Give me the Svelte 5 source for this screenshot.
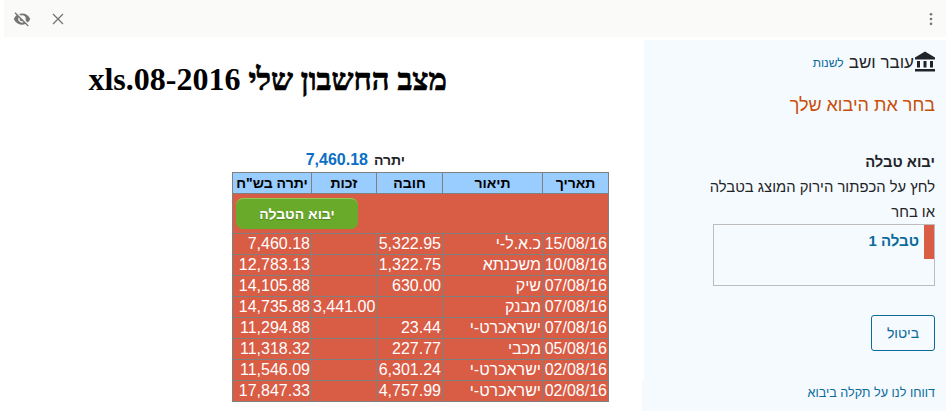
<script>
	const rows = [
		["15/08/16", "כ.א.ל-י", "5,322.95", "", "7,460.18"],
		["10/08/16", "משכנתא", "1,322.75", "", "12,783.13"],
		["07/08/16", "שיק", "630.00", "", "14,105.88"],
		["07/08/16", "מבנק", "", "3,441.00", "14,735.88"],
		["07/08/16", "ישראכרט-י", "23.44", "", "11,294.88"],
		["05/08/16", "מכבי", "227.77", "", "11,318.32"],
		["02/08/16", "ישראכרט-י", "6,301.24", "", "11,546.09"],
		["02/08/16", "ישראכרט-י", "4,757.99", "", "17,847.33"]
	];
</script>

<div class="page">
	<header class="topbar">
		<div class="top-left">
			<svg class="eye" viewBox="0 0 24 24" width="18" height="18">
				<path fill="#757575" d="M12 7a5 5 0 0 1 5 5c0 .65-.13 1.26-.36 1.83l2.92 2.92A11.8 11.8 0 0 0 23 12 11.83 11.83 0 0 0 12 4.5c-1.4 0-2.74.25-3.98.7l2.16 2.16A4.85 4.85 0 0 1 12 7zM2 4.27l2.28 2.28.46.46A11.8 11.8 0 0 0 1 12a11.82 11.82 0 0 0 15.38 6.66l.42.42L19.73 22 21 20.73 3.27 3 2 4.27zM7.53 9.8l1.55 1.55A3 3 0 0 0 12 15c.22 0 .44-.03.65-.08l1.55 1.55A5 5 0 0 1 7.53 9.8z" />
			</svg>
			<svg class="close" viewBox="0 0 14 14" width="14" height="14">
				<path d="M2 2l10 10M12 2L2 12" stroke="#757575" stroke-width="1.3" fill="none" />
			</svg>
		</div>
		<svg class="dots" viewBox="0 0 4 16" width="4" height="14">
			<circle cx="2" cy="2.5" r="1.5" fill="#757575" />
			<circle cx="2" cy="8" r="1.5" fill="#757575" />
			<circle cx="2" cy="13.5" r="1.5" fill="#757575" />
		</svg>
	</header>

	<div class="content">
		<main class="report">
			<h1 dir="rtl"><span class="he">מצב החשבון שלי</span> xls.08-2016</h1>
			<div class="balance" dir="rtl">יתרה <span>7,460.18</span></div>
			<table dir="rtl">
				<colgroup>
					<col class="c-date" />
					<col class="c-desc" />
					<col class="c-num" />
					<col class="c-num2" />
					<col class="c-bal" />
				</colgroup>
				<thead>
					<tr>
						<th>תאריך</th>
						<th>תיאור</th>
						<th>חובה</th>
						<th>זכות</th>
						<th>יתרה בש"ח</th>
					</tr>
				</thead>
				<tbody>
					<tr class="import-row">
						<td colspan="5">
							<div class="import-wrap"><button class="import">יבוא הטבלה</button></div>
						</td>
					</tr>
					{#each rows as r}
						<tr>
							<td>{r[0]}</td>
							<td>{r[1]}</td>
							<td class="num">{r[2]}</td>
							<td class="num">{r[3]}</td>
							<td class="num">{r[4]}</td>
						</tr>
					{/each}
				</tbody>
			</table>
		</main>

		<aside class="side" dir="rtl">
			<div class="account">
				<svg viewBox="0 0 20 20" width="20" height="21">
					<path fill="#1f2428" d="M10 0L0 6v2h20V6zM2 9.5h3v6.5H2zM8.500 9.5h3v6.5h-3zM15 9.5h3v6.5h-3zM0 17.500h20V20H0z" />
				</svg>
				<span class="acc-name">עובר ושב</span>
				<a class="acc-change">לשנות</a>
			</div>
			<h2>בחר את היבוא שלך</h2>
			<div class="help">
				<b>יבוא טבלה</b>
				<p>לחץ על הכפתור הירוק המוצג בטבלה</p>
				<p>או בחר</p>
			</div>
			<div class="picker">
				<div class="pick-item"><i></i><span>טבלה 1</span></div>
			</div>
			<button class="cancel">ביטול</button>
			<a class="report-link">דווחו לנו על תקלה ביבוא</a>
		</aside>
	</div>
</div>

<style>
	:global(body) {
		margin: 0;
		background: #fff;
		overflow: hidden;
	}

	.page {
		width: 946px;
		height: 411px;
		overflow: hidden;
		font-family: "Liberation Sans", Arial, sans-serif;
	}

	.topbar {
		height: 37px;
		margin-left: 4px;
		background: #fafaf8;
		display: flex;
		justify-content: space-between;
		align-items: center;
		padding: 0 13px 0 9px;
	}

	.top-left {
		display: flex;
		align-items: center;
		gap: 20px;
	}

	.content {
		display: flex;
		height: 374px;
	}

	.report {
		width: 644px;
		flex: none;
	}

	h1 {
		margin: 24px 0 0 88px;
		width: 359px;
		font-family: "Liberation Serif", serif;
		font-size: 32px;
		line-height: 37px;
		font-weight: bold;
		color: #000;
		white-space: nowrap;
	}

	/* the hebrew face has no real bold here, so thicken it a bit */
	.he {
		font-size: 31px;
		-webkit-text-stroke: 0.7px #000;
	}

	.balance {
		margin: 52px 0 0 305px;
		width: 100px;
		font-size: 14px;
		line-height: 19px;
		font-weight: bold;
		word-spacing: 2px;
		color: #1f2428;
		white-space: nowrap;
	}

	.balance span {
		font-size: 16px;
		color: #0b6fc4;
	}

	table {
		margin: 2px 0 0 232px;
		width: 376px;
		table-layout: fixed;
		border-collapse: collapse;
		background: #d95c45;
		font-size: 16px;
		color: #fff;
	}

	.c-date { width: 66px; }
	.c-desc { width: 100px; }
	.c-num { width: 66px; }
	.c-num2 { width: 65px; }
	.c-bal { width: 79px; }

	th {
		background: #99ccff;
		color: #000;
		font-size: 14px;
		font-weight: bold;
		height: 20px;
		padding: 0;
		border: 1px solid #808080;
		white-space: nowrap;
		overflow: hidden;
	}

	td {
		border: 1px solid #808080;
		padding: 0 1px;
		height: 20px;
		line-height: 20px;
		text-align: right;
		white-space: nowrap;
	}

	td.num {
		direction: ltr;
		text-align: right;
	}

	.import-row td {
		height: 39px;
		padding: 0;
	}

	.import-wrap {
		display: flex;
		justify-content: flex-end;
	}

	.import {
		margin: 0 0 0 3px;
		width: 122px;
		height: 31px;
		background: #6aaa2a;
		border: none;
		border-top: 1px solid #8fc95a;
		border-radius: 7px;
		color: #fff;
		text-shadow: 0 1px 1px #4d7f1c;
		font-family: "Liberation Sans", Arial, sans-serif;
		font-size: 14px;
		font-weight: bold;
		padding: 0;
	}

	.side {
		width: 302px;
		height: 374px;
		margin-top: 3px;
		background: #f4fafd;
		padding: 0 11px 0 0;
		box-sizing: border-box;
		display: flex;
		flex-direction: column;
	}

	.account {
		display: flex;
		align-items: center;
		margin-top: 10px;
		height: 24px;
	}

	.acc-name {
		font-size: 17px;
		color: #1f2428;
		margin: 3px 1px 0 0;
	}

	.acc-change {
		font-size: 12px;
		color: #0b6a9c;
		margin: 3px 5px 0 0;
	}

	h2 {
		margin: 19px 0 0;
		font-size: 18px;
		line-height: 24px;
		font-weight: normal;
		color: #c94f0a;
	}

	.help {
		margin-top: 33px;
		font-size: 14.8px;
		line-height: 25px;
		color: #1f2428;
	}

	.help p {
		margin: 0;
	}

	.picker {
		margin-top: -1px;
		width: 222px;
		height: 63px;
		border: 1px solid #bdbdbd;
		box-sizing: border-box;
	}

	.pick-item {
		display: flex;
		height: 34px;
	}

	.pick-item i {
		width: 10px;
		background: #d95c45;
	}

	.pick-item span {
		margin: 7px 5px 0 0;
		font-size: 15px;
		font-weight: bold;
		color: #0b6a9c;
	}

	.cancel {
		margin-top: 29px;
		width: 64px;
		height: 36px;
		background: transparent;
		border: 1px solid #0b6a9c;
		border-radius: 3px;
		color: #0b6a9c;
		font-family: "Liberation Sans", Arial, sans-serif;
		font-size: 14px;
		padding: 0;
	}

	.report-link {
		margin: 29px -11px 0 -2px;
		padding: 4px 11px 0 0;
		font-size: 12.6px;
		line-height: 18px;
		height: 30px;
		background: #f4fafd;
		color: #0b6a9c;
	}
</style>
